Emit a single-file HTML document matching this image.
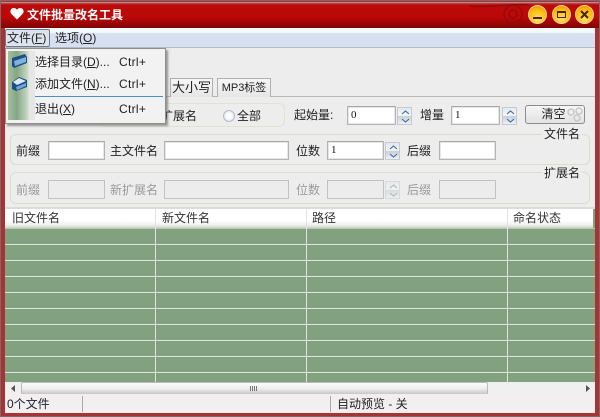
<!DOCTYPE html>
<html lang="zh"><head><meta charset="utf-8"><style>
html,body{margin:0;padding:0}
body{width:600px;height:417px;overflow:hidden;position:relative;background:#fff;font-family:"Liberation Sans","Noto Sans CJK SC",sans-serif;font-size:12px;color:#222}
div,span{position:absolute;box-sizing:border-box;white-space:nowrap}
.t{line-height:16px;height:16px}
.g{color:#9a9a9a}
.i{background:#fff;border:1px solid #b4b4b4;border-top-color:#a8a8a8;height:19px;font-family:"Liberation Serif",serif;font-size:11px;line-height:17px;padding-left:3px;color:#111;box-shadow:inset 0 0 0 1px #e6e6e6}
.d{background:#ececec;border-color:#c2c2c2;box-shadow:none}
.s{width:15px;height:18px;background:linear-gradient(#e4e8ee,#f4f6f8 48%,#c8ced6 50%,#eef0f3);border:1px solid #c6c9ce}
.s svg{position:absolute;left:2px;top:1px}
.fs{border:1px solid #dcdccc;border-radius:6px}
.tab{background:linear-gradient(#f6f6f6,#e6e6e6);border:1px solid #b0b0b0;border-bottom:0;height:19px;line-height:18px;text-align:center}
.hc{top:209px;height:19px;line-height:19px;color:#333}
.rl{left:5px;width:590px;height:1px;background:#dfe6dd}
.cl{top:228px;height:154px;width:1px;background:#dfe6dd}
.btn{width:19px;height:19px;border-radius:50%;top:5px;background:radial-gradient(circle at 50% 75%,#ffe066,#fdb90c 60%,#d98a00);border:1px solid #f2cf94}
</style></head><body>
<!-- frame -->
<div style="left:0;top:0;width:600px;height:417px;background:#a83234;border:1px solid #7b6a6a"></div>
<div style="left:1px;top:2px;width:598px;height:26px;background:linear-gradient(#c84a4a 0,#bb0a0a 2px,#bc0808 55%,#8f0606 90%,#7d0606);border-top:1px solid #b98a8a"></div>
<svg style="position:absolute;left:470px;top:2px" width="70" height="26"><g fill="none" stroke="#960a0a" stroke-width="1.500"><circle cx="43" cy="12" r="4"/><circle cx="43" cy="12" r="9"/><path d="M-10 3C20 7 35 1 60 3"/><path d="M52 20C55 23 62 24 70 22"/></g></svg>
<svg style="position:absolute;left:10px;top:7px" width="14" height="13"><path d="M7 12.500L1 6.500C-.5 4 1 1 3.800 1 5.300 1 6.400 1.700 7 3 7.600 1.700 8.700 1 10.200 1 13 1 14.500 4 13 6.500Z" fill="#fff"/></svg>
<div class="t" style="left:27px;top:7px;color:#fff;font-weight:bold;font-size:12px;width:100px">文件批量改名工具</div>
<div class="btn" style="left:528px"><svg width="17" height="17" style="position:absolute"><rect x="4" y="11" width="9" height="2" fill="#4a2500"/></svg></div>
<div class="btn" style="left:552px"><svg width="17" height="17" style="position:absolute"><rect x="4.500" y="5.500" width="8" height="6" fill="none" stroke="#4a2500" stroke-width="1"/><rect x="4" y="5" width="9" height="2" fill="#4a2500"/></svg></div>
<div class="btn" style="left:575px"><svg width="17" height="17" style="position:absolute"><path d="M5 5L12 12M12 5L5 12" stroke="#4a2500" stroke-width="2"/></svg></div>
<!-- client -->
<div style="left:5px;top:28px;width:590px;height:385px;background:#ededed"></div>
<!-- menu bar -->
<div style="left:5px;top:28px;width:590px;height:20px;background:linear-gradient(#f8fafd 0,#f4f7fc 22%,#d6e0f1 32%,#d6e0f1);border-bottom:1px solid #b6bcc6"></div>
<div style="left:5px;top:29px;width:45px;height:18px;border:1px solid #6f7886;border-radius:2px;background:#dde4f0"></div>
<div class="t" style="left:7px;top:30px;width:44px">文件(<u>F</u>)</div>
<div class="t" style="left:55px;top:30px;width:44px">选项(<u>O</u>)</div>
<!-- tabs -->
<div style="left:5px;top:96px;width:590px;height:1px;background:#b8b8b8"></div>
<div class="tab" style="left:170px;top:78px;width:43px;font-size:13px">大小写</div>
<div class="tab" style="left:217px;top:78px;width:54px;font-size:11px;font-family:'Liberation Sans','Noto Sans CJK SC',sans-serif">MP3标签</div>
<!-- row 1 -->
<div class="fs" style="left:100px;top:103px;width:185px;height:24px;border-color:#e2e2d2"></div>
<div class="t" style="left:161px;top:108px;width:40px">扩展名</div>
<div style="left:223px;top:110px;width:12px;height:12px;border-radius:50%;background:radial-gradient(circle,#fff 25%,#d5dde8);border:1px solid #b3bcc8"></div>
<div class="t" style="left:237px;top:108px;width:28px">全部</div>
<div class="t" style="left:294px;top:107px;width:50px">起始量:</div>
<div class="i" style="left:347px;top:106px;width:49px">0</div>
<div class="s" style="left:397px;top:107px"><svg width="11" height="15"><path d="M2 5L5.500 2 9 5M2 10L5.500 13 9 10" fill="none" stroke="#3a6ea8" stroke-width="1.100"/></svg></div>
<div class="t" style="left:420px;top:107px;width:28px">增量</div>
<div class="i" style="left:451px;top:106px;width:49px">1</div>
<div class="s" style="left:502px;top:107px"><svg width="11" height="15"><path d="M2 5L5.500 2 9 5M2 10L5.500 13 9 10" fill="none" stroke="#3a6ea8" stroke-width="1.100"/></svg></div>
<div style="left:525px;top:105px;width:60px;height:19px;border:1px solid #8c8c8c;border-radius:3px;background:linear-gradient(#f6f6f6,#e2e2e2);text-align:center;line-height:17px;padding-right:3px">清空</div>
<svg style="position:absolute;left:565px;top:105px" width="20" height="19"><g fill="none" stroke="#c8c8c8" stroke-width="1.500"><circle cx="6" cy="7" r="3"/><circle cx="14" cy="6" r="3"/><circle cx="12" cy="13" r="3"/></g></svg>
<!-- filename group -->
<div class="fs" style="left:10px;top:134px;width:580px;height:31px"></div>
<div class="t" style="left:542px;top:126px;width:40px;background:#ededed;text-align:center">文件名</div>
<div class="t" style="left:16px;top:143px;width:28px">前缀</div>
<div class="i" style="left:48px;top:141px;width:57px"></div>
<div class="t" style="left:110px;top:143px;width:50px">主文件名</div>
<div class="i" style="left:164px;top:141px;width:125px"></div>
<div class="t" style="left:296px;top:143px;width:28px">位数</div>
<div class="i" style="left:327px;top:141px;width:57px">1</div>
<div class="s" style="left:385px;top:142px"><svg width="11" height="15"><path d="M2 5L5.500 2 9 5M2 10L5.500 13 9 10" fill="none" stroke="#3a6ea8" stroke-width="1.100"/></svg></div>
<div class="t" style="left:407px;top:143px;width:28px">后缀</div>
<div class="i" style="left:439px;top:141px;width:57px"></div>
<!-- extension group -->
<div class="fs" style="left:10px;top:172px;width:580px;height:32px"></div>
<div class="t" style="left:542px;top:165px;width:40px;background:#ededed;text-align:center">扩展名</div>
<div class="t g" style="left:16px;top:182px;width:28px">前缀</div>
<div class="i d" style="left:48px;top:180px;width:57px"></div>
<div class="t g" style="left:110px;top:182px;width:50px">新扩展名</div>
<div class="i d" style="left:164px;top:180px;width:125px"></div>
<div class="t g" style="left:296px;top:182px;width:28px">位数</div>
<div class="i d" style="left:327px;top:180px;width:57px"></div>
<div class="s" style="left:385px;top:181px;opacity:.55"><svg width="11" height="15"><path d="M2 5L5.500 2 9 5M2 10L5.500 13 9 10" fill="none" stroke="#888" stroke-width="1.100"/></svg></div>
<div class="t g" style="left:407px;top:182px;width:28px">后缀</div>
<div class="i d" style="left:439px;top:180px;width:57px"></div>
<!-- table -->
<div style="left:5px;top:207px;width:590px;height:2px;background:#dcdcdc"></div>
<div style="left:5px;top:209px;width:590px;height:19px;background:linear-gradient(#fff 60%,#eef0ec 85%,#c9d0c6)"></div>
<div style="left:5px;top:228px;width:590px;height:154px;background:#82a17f"></div>
<div style="left:593px;top:209px;width:2px;height:19px;background:#82a17f"></div>
<div class="rl" style="top:228px;background:#b6c8b3"></div>
<div class="rl" style="top:244px"></div><div class="rl" style="top:260px"></div><div class="rl" style="top:276px"></div><div class="rl" style="top:292px"></div><div class="rl" style="top:308px"></div><div class="rl" style="top:324px"></div><div class="rl" style="top:340px"></div><div class="rl" style="top:356px"></div><div class="rl" style="top:372px"></div>
<div class="cl" style="left:155px"></div><div class="cl" style="left:306px"></div><div class="cl" style="left:507px"></div>
<div style="left:155px;top:209px;width:1px;height:19px;background:#dfe2de"></div>
<div style="left:306px;top:209px;width:1px;height:19px;background:#dfe2de"></div>
<div style="left:507px;top:209px;width:1px;height:19px;background:#dfe2de"></div>
<div class="hc" style="left:12px;width:60px">旧文件名</div>
<div class="hc" style="left:162px;width:60px">新文件名</div>
<div class="hc" style="left:312px;width:40px">路径</div>
<div class="hc" style="left:513px;width:60px">命名状态</div>
<!-- scrollbar -->
<div style="left:5px;top:382px;width:590px;height:12px;background:#f0f0f0"></div>
<div style="left:21px;top:382px;width:467px;height:12px;border:1px solid #bbb;border-bottom:0;border-radius:2px 2px 0 0;background:linear-gradient(#fbfbfb,#ececec 55%,#c6c6c6)"></div>
<div style="left:250px;top:386px;width:7px;height:5px;background:repeating-linear-gradient(90deg,#777 0 1px,transparent 1px 2px)"></div>
<svg style="position:absolute;left:11px;top:385px" width="5" height="7"><path d="M4 0V7L0 3.500Z" fill="#555"/></svg>
<svg style="position:absolute;left:585px;top:385px" width="5" height="7"><path d="M1 0V7L5 3.500Z" fill="#555"/></svg>
<!-- status -->
<div style="left:5px;top:394px;width:590px;height:19px;background:#f1efef"></div>
<div style="left:82px;top:396px;width:1px;height:16px;background:#a8a8a8"></div>
<div style="left:330px;top:396px;width:1px;height:16px;background:#a8a8a8"></div>
<div class="t" style="left:7px;top:396px;width:60px;color:#223">0个文件</div>
<div class="t" style="left:337px;top:396px;width:90px">自动预览 - 关</div>
<!-- popup menu -->
<div style="left:5px;top:48px;width:161px;height:76px;background:#f2f2f2;border:1px solid #8f8f8f;box-shadow:2px 2px 2px rgba(90,90,90,.6)"></div>
<div style="left:8px;top:51px;width:22px;height:69px;background:linear-gradient(90deg,#a4bf9f,#86a683 40%,#c3d3c0 85%,#e6ece4)"></div>
<div style="left:30px;top:51px;width:5px;height:69px;background:#e6e6e6"></div>
<svg style="position:absolute;left:11px;top:53px" width="18" height="16"><path d="M1 5L14 1 16 4 16 10 3 15 1 13Z" fill="#1d4f86"/><path d="M3 8L15 4V9L4 13Z" fill="#7fb2dc"/></svg>
<svg style="position:absolute;left:11px;top:76px" width="18" height="16"><path d="M1 6L8 1 16 4 16 11 5 15 1 13Z" fill="#1d4f86"/><path d="M2 6L8 2 15 5 6 9Z" fill="#dfe9f3"/><path d="M5 11L15 7V10L6 14Z" fill="#6fa6d6"/></svg>
<div class="t" style="left:35px;top:54px;width:76px">选择目录(<u>D</u>)...</div>
<div class="t" style="left:119px;top:54px;width:30px;letter-spacing:.3px">Ctrl+</div>
<div class="t" style="left:35px;top:76px;width:76px">添加文件(<u>N</u>)...</div>
<div class="t" style="left:119px;top:76px;width:30px;letter-spacing:.3px">Ctrl+</div>
<div style="left:35px;top:96px;width:128px;height:1px;background:#4f8fc4"></div>
<div class="t" style="left:35px;top:101px;width:46px">退出(<u>X</u>)</div>
<div class="t" style="left:119px;top:101px;width:30px;letter-spacing:.3px">Ctrl+</div>
</body></html>
